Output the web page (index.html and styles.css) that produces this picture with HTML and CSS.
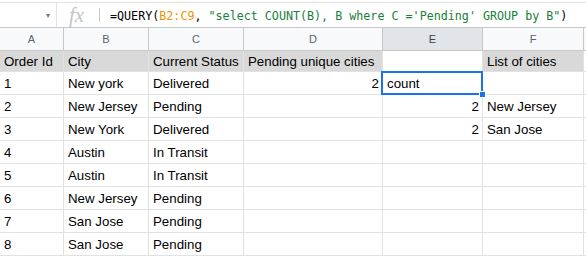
FILE: index.html
```html
<!DOCTYPE html>
<html lang="en">
<head>
    <meta charset="UTF-8">
    <meta name="viewport" content="width=device-width, initial-scale=1.0">
    <title>Pending cities</title>
    <link rel="stylesheet" href="styles.css">
</head>
<body>
    <div class="formula-bar">
        <div class="name-box"><span class="caret">&#9662;</span></div>
        <div class="fx">fx</div>
        <div class="fx-sep"></div>
        <div class="formula">=QUERY(<span class="range">B2:C9</span>, <span class="str">"select COUNT(B), B where C ='Pending' GROUP by B"</span>)</div>
    </div>

    <div class="col-heads">
        <div class="col-head">A</div>
        <div class="col-head">B</div>
        <div class="col-head">C</div>
        <div class="col-head">D</div>
        <div class="col-head active">E</div>
        <div class="col-head">F</div>
        <div class="col-head"></div>
    </div>

    <div class="cells">
        <div class="cell head">Order Id</div>
        <div class="cell head">City</div>
        <div class="cell head">Current Status</div>
        <div class="cell head">Pending unique cities</div>
        <div class="cell"></div>
        <div class="cell head">List of cities</div>
        <div class="cell"></div>

        <div class="cell">1</div>
        <div class="cell">New york</div>
        <div class="cell">Delivered</div>
        <div class="cell num">2</div>
        <div class="cell selected">count</div>
        <div class="cell"></div>
        <div class="cell"></div>

        <div class="cell">2</div>
        <div class="cell">New Jersey</div>
        <div class="cell">Pending</div>
        <div class="cell"></div>
        <div class="cell num">2</div>
        <div class="cell">New Jersey</div>
        <div class="cell"></div>

        <div class="cell">3</div>
        <div class="cell">New York</div>
        <div class="cell">Delivered</div>
        <div class="cell"></div>
        <div class="cell num">2</div>
        <div class="cell">San Jose</div>
        <div class="cell"></div>

        <div class="cell">4</div>
        <div class="cell">Austin</div>
        <div class="cell">In Transit</div>
        <div class="cell"></div>
        <div class="cell"></div>
        <div class="cell"></div>
        <div class="cell"></div>

        <div class="cell">5</div>
        <div class="cell">Austin</div>
        <div class="cell">In Transit</div>
        <div class="cell"></div>
        <div class="cell"></div>
        <div class="cell"></div>
        <div class="cell"></div>

        <div class="cell">6</div>
        <div class="cell">New Jersey</div>
        <div class="cell">Pending</div>
        <div class="cell"></div>
        <div class="cell"></div>
        <div class="cell"></div>
        <div class="cell"></div>

        <div class="cell">7</div>
        <div class="cell">San Jose</div>
        <div class="cell">Pending</div>
        <div class="cell"></div>
        <div class="cell"></div>
        <div class="cell"></div>
        <div class="cell"></div>

        <div class="cell">8</div>
        <div class="cell">San Jose</div>
        <div class="cell">Pending</div>
        <div class="cell"></div>
        <div class="cell"></div>
        <div class="cell"></div>
        <div class="cell"></div>
    </div>
</body>
</html>
```

FILE: styles.css
```css
body {
  margin: 0;
  background: #fff;
  font-family: "Liberation Sans", Arial, sans-serif;
  overflow: hidden;
}

/* formula bar */
.formula-bar {
  margin-top: 2px;
  height: 24px;
  border-top: 1px solid #e3e3e3;
  border-bottom: 1px solid #c7c7c7;
  display: flex;
  align-items: center;
}

.name-box {
  width: 57px;
  height: 100%;
  border-right: 1px solid #e3e3e3;
  display: flex;
  align-items: center;
  justify-content: flex-end;
  box-sizing: border-box;
  padding-right: 6px;
}

.caret {
  color: #777;
  font-size: 8px;
}

.fx {
  width: 42px;
  padding-left: 12px;
  box-sizing: border-box;
  font-family: "Liberation Serif", serif;
  font-style: italic;
  font-size: 21px;
  color: #c4c4c4;
  line-height: 24px;
}

.fx-sep {
  width: 1px;
  height: 14px;
  background: #c7c7c7;
  margin-right: 10px;
}

.formula {
  font-family: "DejaVu Sans Mono", monospace;
  font-size: 11.7px;
  color: #000;
  white-space: nowrap;
  padding-top: 1px;
}

.range {
  color: #f09300;
}

.str {
  color: #188038;
}

/* column letters */
.col-heads {
  display: grid;
  grid-template-columns: 63px 84px 94px 138px 99px 100px 1fr;
  column-gap: 1px;
  background: #c7c7c7;
  border-bottom: 1px solid #c7c7c7;
}

.col-head {
  height: 22px;
  background: #f8f9fa;
  color: #5f6368;
  font-size: 11px;
  display: flex;
  align-items: center;
  justify-content: center;
}

.col-head.active {
  background: #e1e5ea;
  color: #3c4043;
}

/* grid of cells */
.cells {
  display: grid;
  grid-template-columns: 63px 84px 94px 138px 99px 100px 1fr;
  grid-template-rows: 20px repeat(8, 22px);
  gap: 1px;
  padding-bottom: 1px;
  background: #e2e2e2;
}

.cell {
  background: #fff;
  font-size: 13.3px;
  color: #000;
  padding: 1px 3px 0 4px;
  display: flex;
  align-items: center;
  white-space: nowrap;
  position: relative;
}

.cell.head {
  background: #d9d9d9;
}

.cell.num {
  justify-content: flex-end;
}

.cell.selected {
  z-index: 2;
}

.cell.selected::before {
  content: "";
  position: absolute;
  top: -1px;
  left: -2px;
  right: -1px;
  bottom: -1px;
  border: 2px solid #1a73e8;
}

.cell.selected::after {
  content: "";
  position: absolute;
  right: -4px;
  bottom: -4px;
  width: 7px;
  height: 7px;
  background: #1a73e8;
  border: 1px solid #fff;
  box-sizing: border-box;
}
```
